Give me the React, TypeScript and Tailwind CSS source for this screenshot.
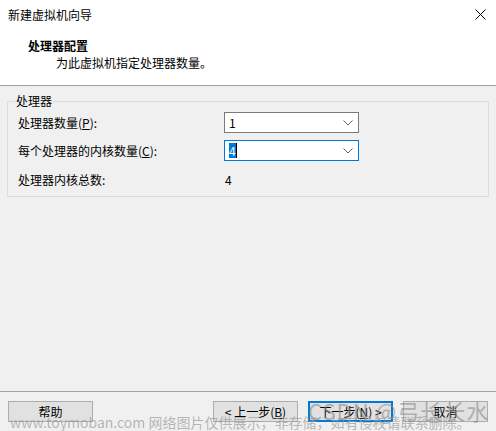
import React from "react";

const font = { fontFamily: '"Microsoft YaHei UI", "Noto Sans CJK SC", "Noto Sans", sans-serif' };

function Chevron() {
  return (
    <svg width="10" height="6" viewBox="0 0 10 6" className="text-[#606060]">
      <path d="M0.5 0.5 L5 5 L9.5 0.5" fill="none" stroke="currentColor" strokeWidth="1" />
    </svg>
  );
}

function Combo({ value, focused }: { value: string; focused?: boolean }) {
  return (
    <div
      className={`flex h-[21px] w-[135px] items-center justify-between bg-white pl-[4px] pr-[5px] ${
        focused ? "border border-[#0078d7]" : "border border-[#7a7a7a]"
      }`}
    >
      {focused ? (
        <span className="flex items-center">
          <span className="bg-[#0078d7] leading-[15px] text-white">{value}</span>
          <span className="h-[15px] w-[1px] bg-black" />
        </span>
      ) : (
        <span>{value}</span>
      )}
      <Chevron />
    </div>
  );
}

function Btn({ children, primary }: { children: React.ReactNode; primary?: boolean }) {
  return (
    <button
      className={`flex h-[21px] w-[85px] items-center justify-center bg-[#e1e1e1] text-[12px] text-black ${
        primary ? "border-2 border-[#0078d7]" : "border border-[#adadad]"
      }`}
    >
      {children}
    </button>
  );
}

export default function App() {
  return (
    <div className="relative flex h-[431px] w-[496px] flex-col overflow-hidden bg-[#f0f0f0] text-[12px] text-black" style={font}>
      {/* Header */}
      <div className="flex h-[86px] flex-col border-b border-[#a0a0a0] bg-white">
        <div className="flex h-[29px] items-center justify-between pl-[8px] pr-[10px]">
          <span className="text-[12px]">新建虚拟机向导</span>
          <svg width="11" height="11" viewBox="0 0 11 11">
            <path d="M0.5 0.5 L10.5 10.5 M10.5 0.5 L0.5 10.5" stroke="#000" strokeWidth="1" />
          </svg>
        </div>
        <div className="pl-[28px] pt-[8px] font-bold leading-[17px]">处理器配置</div>
        <div className="pl-[56px] leading-[17px]">为此虚拟机指定处理器数量。</div>
      </div>

      {/* Group box */}
      <div className="px-[7px] pt-[15px]">
        <div className="relative h-[96px] border border-[#dcdcdc]">
          <span className="absolute left-[7px] top-[-10px] bg-[#f0f0f0] px-[1px] leading-[17px]">处理器</span>
          <div className="grid grid-cols-[206px_1fr] items-center gap-y-[7px] pl-[10px] pt-[10px]">
            <span>处理器数量(<span className="underline">P</span>):</span>
            <Combo value="1" />
            <span>每个处理器的内核数量(<span className="underline">C</span>):</span>
            <Combo value="4" focused />
            <span className="pt-[3px]">处理器内核总数:</span>
            <span className="pl-[1px] pt-[3px]">4</span>
          </div>
        </div>
      </div>

      <div className="flex-1" />

      {/* Footer */}
      <div className="h-[40px] border-t border-[#a0a0a0]">
        <div className="flex items-center pl-[8px] pr-[8px] pt-[9px]">
          <Btn>帮助</Btn>
          <div className="flex-1" />
          <div className="flex gap-[10px]">
            <Btn>&lt; 上一步(<span className="underline">B</span>)</Btn>
            <Btn primary>下一步(<span className="underline">N</span>) &gt;</Btn>
            <Btn>取消</Btn>
          </div>
        </div>
      </div>

      {/* Watermarks */}
      <div className="pointer-events-none absolute left-[10px] top-[412px] whitespace-nowrap text-[14px] text-[#9a9a9a]/70">
        www.toymoban.com 网络图片仅供展示，非存储，如有侵权请联系删除。
      </div>
      <div className="pointer-events-none absolute left-[308px] top-[396px] whitespace-nowrap text-[22px] leading-[28px] tracking-[1px] text-[#8a8a8a]/60">
        CSDN @弓长长水
      </div>
    </div>
  );
}
